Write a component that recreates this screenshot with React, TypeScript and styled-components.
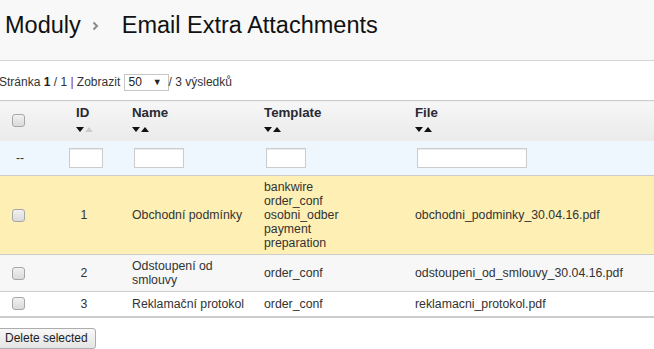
import styled, { createGlobalStyle } from "styled-components";

const GlobalStyle = createGlobalStyle`
  html, body {
    margin: 0;
    padding: 0;
    background: #fff;
  }
  body {
    font-family: "Liberation Sans", Arial, sans-serif;
    color: #333;
    overflow: hidden;
  }
`;

type Row = {
  id: number;
  name: string;
  templates: string[];
  file: string;
  tone: "hl" | "alt" | "plain";
};

const rows: Row[] = [
  {
    id: 1,
    name: "Obchodní podmínky",
    templates: ["bankwire", "order_conf", "osobni_odber", "payment", "preparation"],
    file: "obchodni_podminky_30.04.16.pdf",
    tone: "hl",
  },
  {
    id: 2,
    name: "Odstoupení od smlouvy",
    templates: ["order_conf"],
    file: "odstoupeni_od_smlouvy_30.04.16.pdf",
    tone: "alt",
  },
  {
    id: 3,
    name: "Reklamační protokol",
    templates: ["order_conf"],
    file: "reklamacni_protokol.pdf",
    tone: "plain",
  },
];

const toneBg = { hl: "#feefb5", alt: "#f7f7f7", plain: "#fff" };

const SortArrows = ({ upMuted }: { upMuted?: boolean }) => (
  <Arrows>
    <svg width="8" height="5" viewBox="0 0 8 5">
      <polygon points="0,0 8,0 4,5" fill="#111" />
    </svg>
    <svg width="8" height="5" viewBox="0 0 8 5">
      <polygon points="0,5 8,5 4,0" fill={upMuted ? "#ccc" : "#111"} />
    </svg>
  </Arrows>
);

const App = () => {
  return (
    <Page>
      <GlobalStyle />
      <PageHead>
        <Crumb>Moduly</Crumb>
        <Chevron width="7" height="10" viewBox="0 0 7 10">
          <polyline points="1.5,1.5 5,5 1.5,8.5" fill="none" stroke="#8a8a8a" strokeWidth="2" />
        </Chevron>
        <Crumb>Email Extra Attachments</Crumb>
      </PageHead>

      <Pager>
        Stránka <b>1</b> / 1 <Pipe>|</Pipe> Zobrazit{" "}
        <SelectBox>
          <span>50</span>
          <span>▼</span>
        </SelectBox>{" "}
        / 3 výsledků
      </Pager>

      <Grid>
        <colgroup>
          <col style={{ width: 50 }} />
          <col style={{ width: 68 }} />
          <col style={{ width: 142 }} />
          <col style={{ width: 151 }} />
          <col />
        </colgroup>
        <thead>
          <tr>
            <HeadCell>
              <Check />
            </HeadCell>
            <HeadCell $pl={26}>
              <HeadLabel>ID</HeadLabel>
              <SortArrows upMuted />
            </HeadCell>
            <HeadCell $pl={14}>
              <HeadLabel>Name</HeadLabel>
              <SortArrows />
            </HeadCell>
            <HeadCell>
              <HeadLabel>Template</HeadLabel>
              <SortArrows />
            </HeadCell>
            <HeadCell>
              <HeadLabel>File</HeadLabel>
              <SortArrows />
            </HeadCell>
          </tr>
          <tr>
            <FilterCell $pl={16}>--</FilterCell>
            <FilterCell $center>
              <FilterInput $w={34} />
            </FilterCell>
            <FilterCell $pl={16}>
              <FilterInput $w={50} />
            </FilterCell>
            <FilterCell $pl={6}>
              <FilterInput $w={40} />
            </FilterCell>
            <FilterCell $pl={6}>
              <FilterInput $w={110} />
            </FilterCell>
          </tr>
        </thead>
        <tbody>
          {rows.map((r) => (
            <tr key={r.id}>
              <Cell $bg={toneBg[r.tone]} $last={r.id === 3}>
                <Check />
              </Cell>
              <Cell $bg={toneBg[r.tone]} $last={r.id === 3} $center>
                {r.id}
              </Cell>
              <Cell $bg={toneBg[r.tone]} $last={r.id === 3} $pl={14}>
                {r.name}
              </Cell>
              <Cell $bg={toneBg[r.tone]} $last={r.id === 3}>
                {r.templates.map((t) => (
                  <div key={t}>{t}</div>
                ))}
              </Cell>
              <Cell $bg={toneBg[r.tone]} $last={r.id === 3}>
                {r.file}
              </Cell>
            </tr>
          ))}
        </tbody>
      </Grid>

      <DeleteButton>Delete selected</DeleteButton>
    </Page>
  );
};

const Page = styled.div`
  width: 654px;
  height: 349px;
  overflow: hidden;
`;

const PageHead = styled.div`
  height: 60px;
  background: #f8f8f8;
  border-bottom: 1px solid #d4d4d4;
  display: flex;
  align-items: flex-start;
  padding-left: 5px;
`;

const Crumb = styled.h1`
  margin: 12px 0 0;
  font-size: 23.5px;
  line-height: 26px;
  font-weight: normal;
  color: #111;
`;

const Chevron = styled.svg`
  margin: 21px 23px 0 11px;
`;

const Pager = styled.div`
  height: 39px;
  box-sizing: border-box;
  padding-top: 3px;
  margin-left: -1px;
  display: flex;
  align-items: center;
  font-size: 12px;
  color: #333;
  white-space: pre;

  b {
    font-weight: bold;
    color: #222;
  }
`;

const Pipe = styled.span`
  color: #7b1f7b;
`;

const SelectBox = styled.div`
  width: 45px;
  height: 17px;
  box-sizing: border-box;
  border: 1px solid #c6c6c6;
  background: #fff;
  display: flex;
  align-items: center;
  justify-content: space-between;
  padding: 0 6px 0 4px;
  font-size: 12px;
  color: #222;

  span:last-child {
    font-size: 9px;
  }
`;

const Grid = styled.table`
  width: 654px;
  border-collapse: collapse;
  table-layout: fixed;
  border-top: 1px solid #ccc;
  font-size: 12.3px;
  color: #333;
`;

const HeadCell = styled.th<{ $pl?: number }>`
  height: 40px;
  box-sizing: border-box;
  padding: 4px 0 0 ${(p) => p.$pl ?? 4}px;
  text-align: left;
  vertical-align: top;
  background: linear-gradient(#f6f6f6, #eaeaea);

  &:first-child {
    padding: 13px 0 0 12px;
  }
`;

const HeadLabel = styled.div`
  font-size: 13.3px;
  line-height: 16px;
  font-weight: bold;
  color: #2a2a33;
`;

const Arrows = styled.div`
  display: flex;
  gap: 1px;
  margin-top: 6px;
  height: 5px;
`;

const FilterCell = styled.td<{ $pl?: number; $center?: boolean }>`
  height: 35px;
  box-sizing: border-box;
  padding: 0 0 0 ${(p) => p.$pl ?? 4}px;
  background: #eff7fe;
  border-bottom: 1px solid #ccc;
  text-align: ${(p) => (p.$center ? "center" : "left")};
  vertical-align: middle;
  font-size: 12px;
  color: #333;
`;

const FilterInput = styled.div<{ $w: number }>`
  display: inline-block;
  vertical-align: middle;
  width: ${(p) => p.$w}px;
  height: 20px;
  box-sizing: border-box;
  border: 1px solid #ccc;
  background: #fff;
  box-shadow: inset 0 1px 1px #ececec;
`;

const Cell = styled.td<{ $bg: string; $last?: boolean; $pl?: number; $center?: boolean }>`
  height: 25px;
  box-sizing: border-box;
  padding: 4px 4px 4px ${(p) => p.$pl ?? 4}px;
  line-height: 14px;
  vertical-align: middle;
  background: ${(p) => p.$bg};
  border-bottom: ${(p) => (p.$last ? "2px" : "1px")} solid #ccc;
  text-align: ${(p) => (p.$center ? "center" : "left")};

  &:first-child {
    padding-left: 12px;
  }
`;

const Check = styled.span`
  display: block;
  width: 13px;
  height: 13px;
  box-sizing: border-box;
  border: 1px solid #a7a7a7;
  border-radius: 3px;
  background: linear-gradient(#f1f1f1, #dadada);
`;

const DeleteButton = styled.button`
  display: block;
  margin: 10px 0 0 -3px;
  height: 21px;
  padding: 0 7px;
  font-family: "Liberation Sans", Arial, sans-serif;
  font-size: 12px;
  color: #222;
  border: 1px solid #adadad;
  border-radius: 3px;
  background: linear-gradient(#f8f8f8, #e4e4e4);
`;

export default App;
